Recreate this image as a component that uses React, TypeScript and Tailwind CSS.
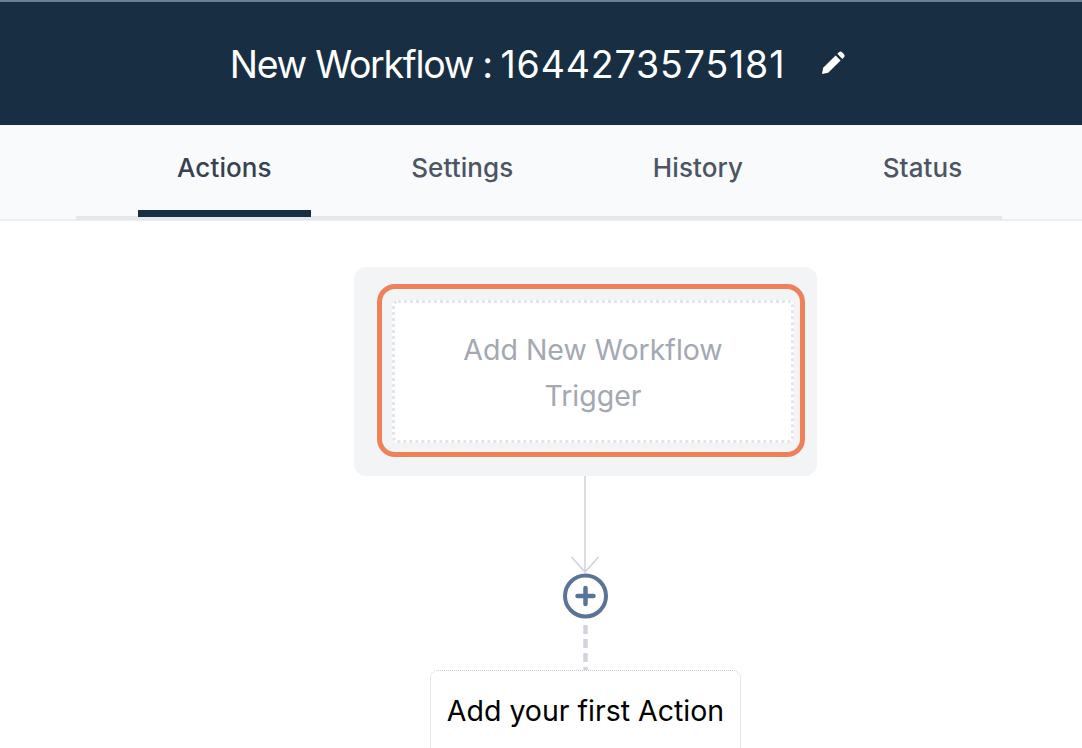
import React from "react";

const tabs = ["Actions", "Settings", "History", "Status"];

function PencilIcon() {
  return (
    <svg viewBox="0 0 24 24" className="ml-9 h-6 w-6 -translate-y-[1px]" fill="#ffffff">
      <path d="M1 23l1.2-6.2L14.6 4.4l5 5L7.200 21.800z" />
      <path d="M16.300 2.700l1.700-1.500c.9-.8 2.100-.8 3 0l2 2c.8.900.8 2.100 0 3l-1.700 1.700z" />
    </svg>
  );
}

function Connector() {
  return (
    <svg width="50" height="194" viewBox="0 0 50 194" className="block">
      <path d="M24 0V95M10.500 81l13.500 15L37.500 81" fill="none" stroke="#d1d5db" strokeWidth="1.600" />
      <circle cx="24.500" cy="120" r="20.500" fill="#ffffff" stroke="#5a7499" strokeWidth="4" />
      <path d="M24.500 112v16M16.500 120h16" stroke="#5a7499" strokeWidth="4.500" strokeLinecap="round" />
      <path d="M24.500 149v45" stroke="#d1d5db" strokeWidth="4.500" strokeDasharray="9 5" />
    </svg>
  );
}

export default function App() {
  return (
    <div className="h-[748px] w-[1082px] overflow-hidden bg-white font-['Inter',sans-serif]">
      <header className="flex h-[125px] items-center justify-center border-t-2 border-[#6f8090] bg-[#182e43] pr-[7px]">
        <h1 className="whitespace-nowrap pt-[3px] text-[37.500px] font-normal leading-none text-white">
          <span className="tracking-[-1.300px]">New Workflow</span>
          <span className="tracking-[-1.500px]"> : </span>
          <span className="tracking-[0.850px]">1644273575181</span>
        </h1>
        <PencilIcon />
      </header>

      <nav className="h-[96px] border-b-2 border-[#eceef0] bg-[#f9fafc]">
        <ul className="ml-[76px] flex h-[95px] w-[926px] gap-[61.500px] border-b-4 border-[#e5e7eb] pl-[62px]">
          {tabs.map((tab, i) => (
            <li
              key={tab}
              className={
                i === 0
                  ? "flex h-[92px] items-start border-b-[7px] border-[#182e43] px-[39px] pt-[26px] text-[26px] font-medium leading-[34px] tracking-[0.1px] text-[#374151]"
                  : "flex items-start px-[39px] pt-[26px] text-[26px] font-medium leading-[34px] tracking-[0.1px] text-[#4b5563]"
              }
            >
              {tab}
            </li>
          ))}
        </ul>
      </nav>

      <main className="ml-[354px] flex w-[463px] flex-col items-center pt-[46px]">
        <section className="h-[209px] w-full rounded-xl bg-[#f3f4f6] pb-[19px] pl-[23px] pr-[12px] pt-[17px]">
          <div className="h-[173px] rounded-[18px] border-[5px] border-[#ee8157] pb-[9px] pl-[10px] pr-[6px] pt-[11px]">
            <div className="flex h-[143px] items-center justify-center rounded-md border-[3px] border-dotted border-[#e3e5e9] bg-white pt-[2px] text-center text-[28.500px] leading-[46px] text-[#a3a8b3]">
              <p>
                Add New Workflow
                <br />
                Trigger
              </p>
            </div>
          </div>
        </section>

        <Connector />

        <div className="flex h-[90px] w-[311px] shrink-0 justify-center rounded-lg border border-dotted border-[#c9ccd2] pt-[20px] text-[28.500px] leading-[40px] text-black">
          Add your first Action
        </div>
      </main>
    </div>
  );
}
